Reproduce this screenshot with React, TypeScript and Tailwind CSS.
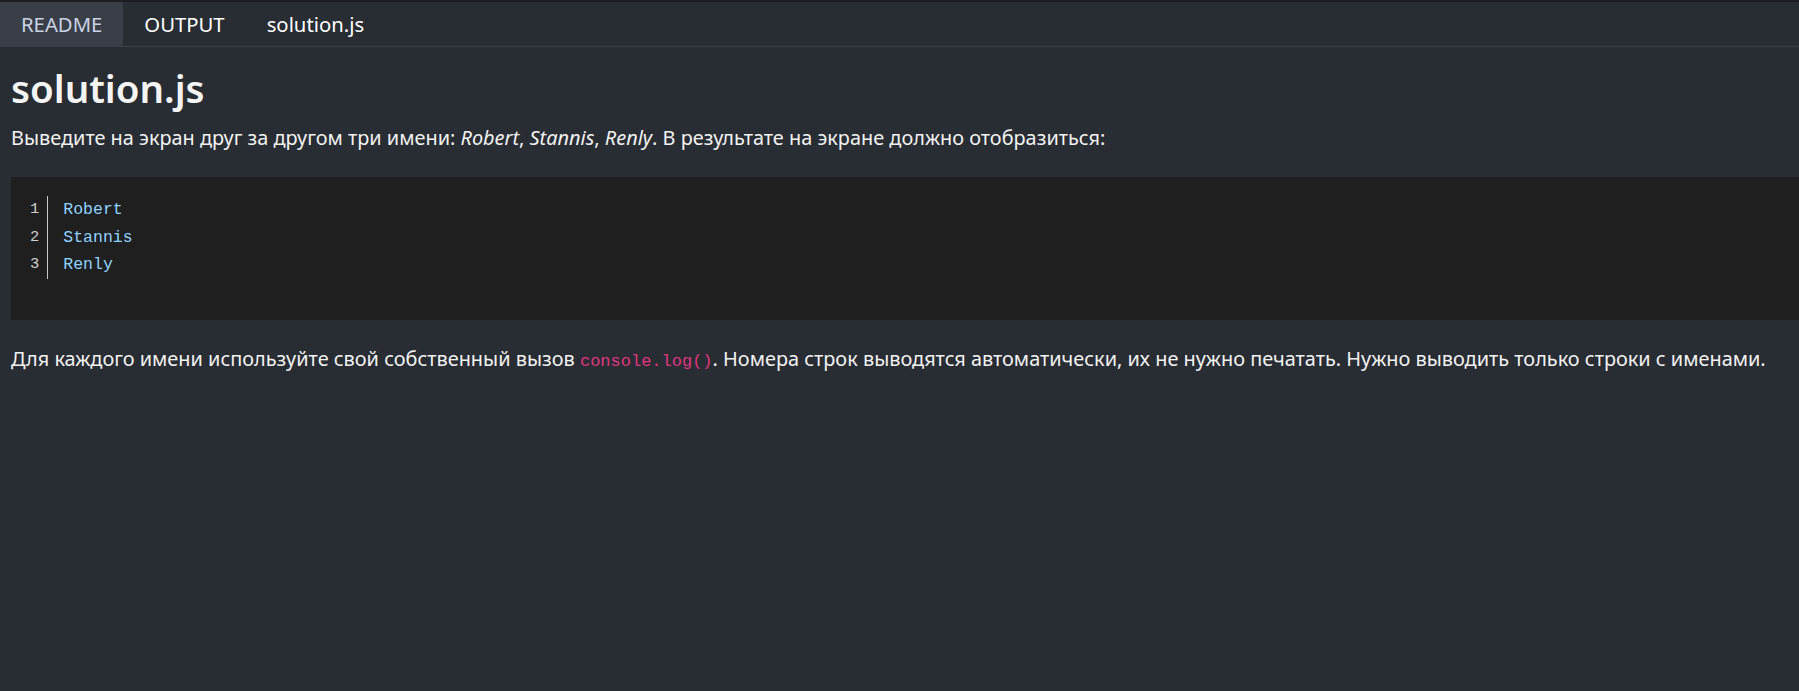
import React from "react";

export default function App() {
  const lines = ["Robert", "Stannis", "Renly"];
  return (
    <div className="min-h-[691px] w-full bg-[#282c33] text-[#f2f2f2] border-t-2 border-[#1b1d20]" style={{ fontFamily: '"Noto Sans", "Open Sans", sans-serif' }}>
      <div className="flex h-[45px] items-stretch border-b border-[#3a3f46]">
        <div className="flex items-center bg-[#3a3f47] px-[21px] text-[20.3px] text-[#c9d3e6]">README</div>
        <div className="flex items-center px-[21px] text-[20.3px] text-white">OUTPUT</div>
        <div className="flex items-center px-[21px] text-[20.3px] text-white">solution.js</div>
      </div>
      <div className="pl-[11px]">
        <h1 className="mt-[15px] text-[38.5px] font-semibold leading-[52px] text-[#f4f4f4]">solution.js</h1>
        <p className="mt-[10px] text-[19.9px] leading-[28px]">
          Выведите на экран друг за другом три имени: <em>Robert</em>, <em>Stannis</em>, <em>Renly</em>. В результате на экране должно отобразиться:
        </p>
        <div className="mt-[25px] h-[143px] bg-[#1f1f1f] pt-[19px] pl-[19px]">
          <div className="flex" style={{ fontFamily: '"Liberation Mono", monospace' }}>
            <div className="flex flex-col border-r border-[#c8c8c8] pr-[8px] text-right text-[15.5px] leading-[27.5px] text-[#d0d0d0]">
              {lines.map((_, i) => (
                <span key={i}>{i + 1}</span>
              ))}
            </div>
            <div className="flex flex-col pl-[15px] text-[16.5px] leading-[27.5px] text-[#8fd3ff]">
              {lines.map((l) => (
                <span key={l}>{l}</span>
              ))}
            </div>
          </div>
        </div>
        <p className="mt-[25px] text-[19.9px] leading-[28px]">
          Для каждого имени используйте свой собственный вызов{" "}
          <code className="text-[17px] text-[#e0357f]" style={{ fontFamily: '"Liberation Mono", monospace' }}>console.log()</code>. Номера строк выводятся автоматически, их не нужно печатать. Нужно выводить только строки с именами.
        </p>
      </div>
    </div>
  );
}
